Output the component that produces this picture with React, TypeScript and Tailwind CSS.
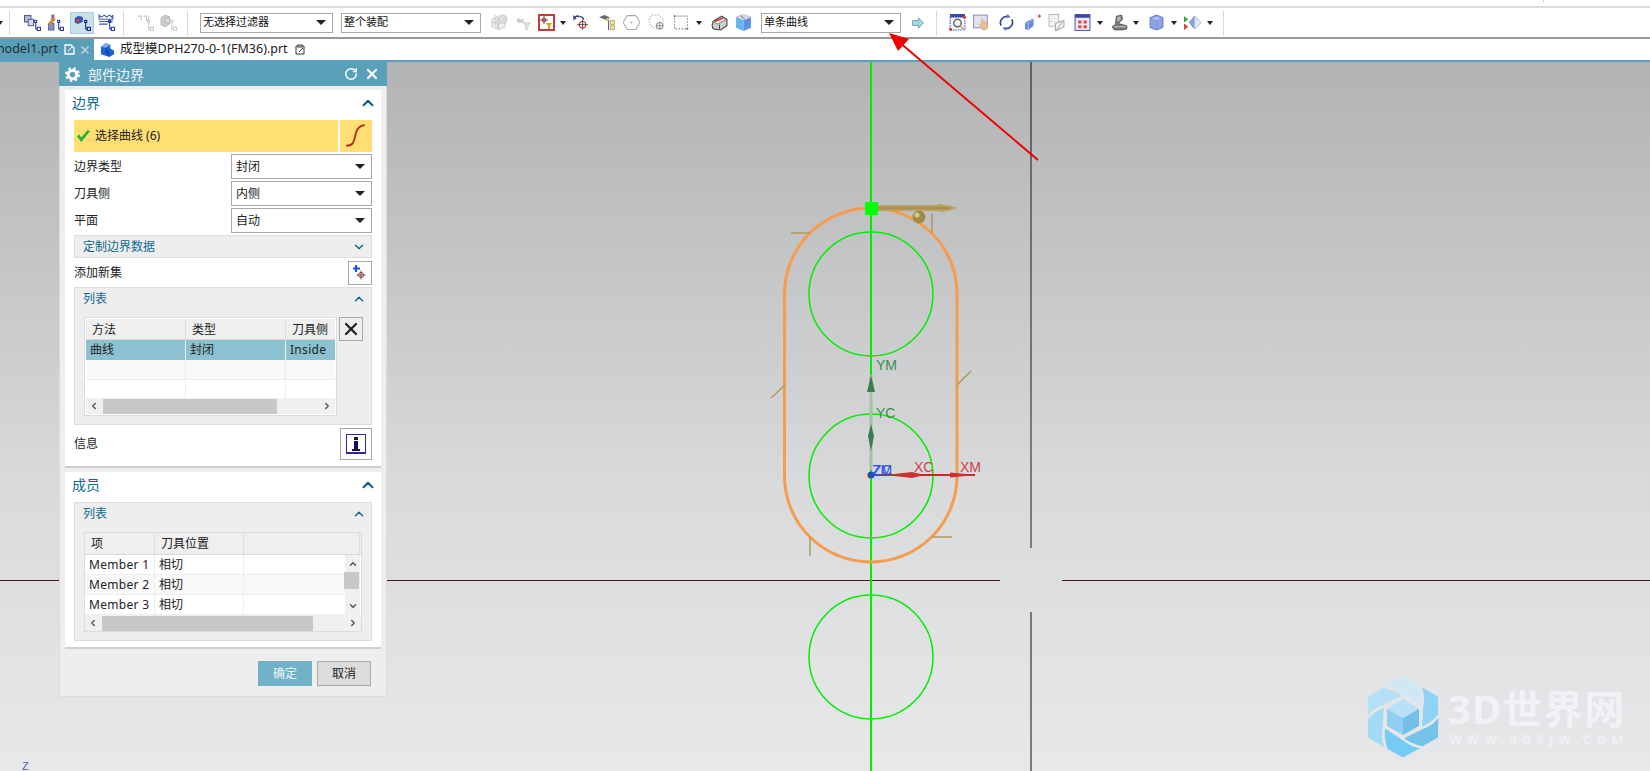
import React from "react";
import { ChevronUp, ChevronDown, ChevronLeft, ChevronRight, RotateCw, X } from "lucide-react";

const Tree = ({ c = "#2a3aa8" }: { c?: string }) => (
  <g fill="none" stroke={c} strokeWidth="1">
    <path d="M11 8v6h2M11 11h0" />
    <rect x="10" y="6" width="2" height="2" />
    <rect x="12.5" y="12.5" width="3" height="3" />
  </g>
);

const Svg = ({ children }: { children: React.ReactNode }) => (
  <svg width="17" height="17" viewBox="0 0 16 16" className="block">
    {children}
  </svg>
);

const T1 = () => (
  <Svg>
    <rect x="0.5" y="1.5" width="6" height="6" fill="#b9bfd8" stroke="#4a5590" />
    <rect x="4" y="5" width="5" height="6" fill="#d5d8e8" stroke="#5a6598" />
    <Tree />
  </Svg>
);
const T2 = () => (
  <Svg>
    <rect x="4" y="0.5" width="3" height="6" fill="#8a6f98" />
    <rect x="1.5" y="9" width="5" height="6" fill="#8a93c8" stroke="#5a6598" />
    <path d="M2 10L7 4" stroke="#c68a40" strokeWidth="3" />
    <Tree />
  </Svg>
);
const T3 = () => (
  <Svg>
    <path d="M1 4l3-2 4 1v4l-4 2-3-1z" fill="#3a55c8" stroke="#26308a" strokeWidth=".5" />
    <circle cx="3.5" cy="6" r="1.6" fill="#d8402a" />
    <Tree c="#16208a" />
  </Svg>
);
const T4 = () => (
  <Svg>
    <path d="M1 1l2 2 3-2 2 2 3-2 2 2 1-2v4H1z" fill="none" stroke="#3a5a9a" />
    <path d="M1 7h13M1 9.5h8" stroke="#3a5a9a" />
    <Tree />
  </Svg>
);
const T5 = () => (
  <Svg>
    <path d="M1 2h3v3M6 2h3v4h2V2M4 2v4" fill="none" stroke="#c8c8c8" />
    <Tree c="#c8c8c8" />
  </Svg>
);
const T6 = () => (
  <Svg>
    <path d="M1 4l4-3 4 2v6l-4 3-4-2z" fill="#cfcfcf" stroke="#bbb" />
    <circle cx="7" cy="6" r="2.5" fill="#ddd" stroke="#bbb" />
    <Tree c="#cfcfcf" />
  </Svg>
);
const A1 = () => (
  <Svg>
    <path d="M1 5l5-3v12l-5-2z" fill="#eee" stroke="#ccc" />
    <path d="M6 8h-6M4 1v10" stroke="#ccc" />
    <circle cx="11" cy="5" r="4" fill="#ddd" stroke="#c8c8c8" />
    <path d="M7 9l6-1v4l-6 3z" fill="#eee" stroke="#ccc" />
  </Svg>
);
const A2 = () => (
  <Svg>
    <path d="M1 6l3-3v2h4v3H4v1z" fill="#ccc" />
    <path d="M7 8h8l-3 4v3h-2v-3z" fill="#ddd" stroke="#ccc" strokeWidth=".5" />
  </Svg>
);
const Target = ({ x, y, r = 2.5 }: { x: number; y: number; r?: number }) => (
  <g fill="none">
    <circle cx={x} cy={y} r={r} stroke="#d22" />
    <path d={`M${x - r - 2} ${y}h${2 * r + 4}M${x} ${y - r - 2}v${2 * r + 4}`} stroke="#222" strokeWidth=".7" />
  </g>
);
const A3 = () => (
  <div className="w-[17px] h-[17px] border-2 border-[#c8393c] flex">
    <svg width="13" height="13" viewBox="0 0 13 13">
      <Target x={4} y={4} r={2} />
      <path d="M6 7h6L10 10v3H8v-3z" fill="#e0a020" />
    </svg>
  </div>
);
const A4 = () => (
  <Svg>
    <path d="M6 2.5a3.5 3.5 0 0 0-5 1.5" fill="none" stroke="#334488" strokeWidth="1.5" />
    <path d="M0 1l.5 5 3-2z" fill="#334488" />
    <path d="M6 2.5c3 0 4 1 4 3" fill="none" stroke="#334488" strokeWidth="1.2" />
    <Target x={9} y={10} r={3} />
  </Svg>
);
const A5 = () => (
  <Svg>
    <path d="M0 3l5-2 5 2-2 3-3-1z" fill="#667" />
    <circle cx="8" cy="5" r="1.5" fill="#d8c050" />
    <path d="M9 6v9" stroke="#5060a8" />
    <rect x="10.5" y="6" width="4" height="4" fill="#e8dca0" stroke="#b8a040" strokeWidth=".6" />
    <rect x="10.5" y="11" width="4" height="4" fill="#e8dca0" stroke="#b8a040" strokeWidth=".6" />
  </Svg>
);
const A6 = () => (
  <Svg>
    <path d="M4 1.5h8l4 6.500-4 6.500H4L0 8z" fill="none" stroke="#aaa" />
    <circle cx="8" cy="8" r="1" fill="#aaa" />
  </Svg>
);
const A7 = () => (
  <Svg>
    <path d="M4 1l7 0 3 4v5l-6 4-6-3-1-6z" fill="none" stroke="#aaa" strokeDasharray="1.3 1.3" />
    <circle cx="11" cy="11" r="3" fill="#eee" stroke="#999" />
    <path d="M7 11h8M11 7v8" stroke="#777" strokeWidth=".6" />
  </Svg>
);
const A8 = () => (
  <Svg>
    <rect x="1.5" y="2" width="12" height="12" fill="none" stroke="#888" strokeDasharray="1.5 1.3" />
    <circle cx="1.5" cy="2" r="1" fill="#888" />
    <circle cx="13.5" cy="14" r="1" fill="#888" />
  </Svg>
);
const A9 = () => (
  <Svg>
    <path d="M1 11l1-4 8-5 5 3v6l-6 4-7-1z" fill="#cfcfcf" stroke="#444" />
    <path d="M3 7.500l8-4 3 2-8 4z" fill="#eee" stroke="#555" strokeWidth=".6" />
    <path d="M4 7l7-3" stroke="#d33" strokeWidth="1.3" />
    <path d="M8 10v4" stroke="#444" />
  </Svg>
);
const A10 = () => (
  <Svg>
    <path d="M1 3l7-3 7 3-7 3z" fill="#bfe6f8" stroke="#e88" strokeWidth=".5" />
    <path d="M1 3l7 3v10l-7-3z" fill="#62b8ee" />
    <path d="M15 3l-7 3v10l7-3z" fill="#5f90e8" />
    <path d="M5 1.500l4 3" stroke="#d33" strokeWidth=".8" />
  </Svg>
);
const GoArrow = () => (
  <svg width="12" height="12" viewBox="0 0 12 12" className="block">
    <path d="M0.5 3.500h6V0.700L11.500 6l-5 5.300V8.500h-6z" fill="#a6d8e4" stroke="#5a8fa8" strokeWidth=".7" />
  </svg>
);
const B1 = () => (
  <Svg>
    <rect x="1" y="0" width="14" height="3" fill="#3a4a9a" />
    <rect x="1" y="3" width="14" height="12" fill="#f2f4fb" stroke="#3a4ad8" strokeDasharray="1.4 1" />
    <circle cx="8" cy="8.500" r="3.500" fill="none" stroke="#666" strokeWidth="1.4" />
    <path d="M10.500 11l3 3" stroke="#c9a860" strokeWidth="1.5" />
    <circle cx="1.500" cy="14.500" r="1.400" fill="#d8342a" />
    <circle cx="14.500" cy="3" r="1.400" fill="#d8342a" />
  </Svg>
);
const B2 = () => (
  <Svg>
    <rect x="0.5" y="1" width="13" height="12" fill="#dfe3f2" stroke="#8a94c0" />
    <path d="M8 8l0-3 1 0 1 3 1-2 1 3 1-1 1 4-2 3h-3l-3-5z" fill="#e8c090" stroke="#c8a070" strokeWidth=".4" />
  </Svg>
);
const B3 = () => (
  <Svg>
    <path d="M3 11A6 6 0 0 1 10 2.500" fill="none" stroke="#3a4a8a" strokeWidth="1.6" />
    <path d="M13 5A6 6 0 0 1 6 13.500" fill="none" stroke="#3a4a8a" strokeWidth="1.6" />
    <path d="M9 0l3 3-4 1zM7 16l-3-3 4-1z" fill="#6a7ac8" />
  </Svg>
);
const B4 = () => (
  <Svg>
    <path d="M1 8l8-4v7l-5 4-3-1z" fill="#6a88e0" />
    <path d="M4 15V9L1 8M4 9l5-5" stroke="#c8d4f4" strokeWidth=".6" fill="none" />
    <path d="M13 2h3M14.500 .5v3" stroke="#e33" />
  </Svg>
);
const B5 = () => (
  <Svg>
    <rect x="1" y="0.5" width="9" height="11" fill="#f4f4f4" stroke="#bbb" />
    <path d="M3 4h1M6 4h1M3 7h1M6 7h1" stroke="#bbb" />
    <path d="M7 9l8-3v6l-8 4z" fill="#f4f4f4" stroke="#aaa" />
    <path d="M8 15l6-8" stroke="#bbb" />
  </Svg>
);
const B6 = () => (
  <Svg>
    <rect x="1" y="0.5" width="14" height="15" fill="#e8ecf8" stroke="#5560b8" />
    <rect x="1" y="0.5" width="14" height="3" fill="#3a46a8" />
    <path d="M4 6h3v3H4zM9 6h3v3H9zM4 10.500h3v3H4zM9 10.500h3v3H9z" fill="#e84a30" />
  </Svg>
);
const B7 = () => (
  <Svg>
    <path d="M5 2l5-1 1 4-4 4 8 2v3l-4 1H3l-2-3 3-2z" fill="#777" stroke="#444" strokeWidth=".6" />
    <path d="M6 3l3-1 0 3-3 3z" fill="#bbb" />
    <path d="M3 12h11" stroke="#ccc" />
  </Svg>
);
const B8 = () => (
  <Svg>
    <path d="M2 3.500L8 1l6 2.500v9L8 15l-6-2.500z" fill="#90a4e4" stroke="#6b7ecb" />
    <path d="M2 3.500L8 6l6-2.500" fill="#bccbf4" stroke="#6b7ecb" strokeWidth=".5" />
    <path d="M8 6v9" stroke="#6b7ecb" strokeWidth=".5" />
  </Svg>
);
const B9 = () => (
  <Svg>
    <path d="M0 2l4 3-4 3z" fill="#2ea83e" />
    <path d="M0 9l4 3-4 3z" fill="#d8403a" />
    <path d="M5 8l5-6 6 6-6 6z" fill="#8ea2cf" stroke="#5a6a98" strokeWidth=".6" />
    <path d="M10 2l6 6-6 6z" fill="#dfe6f4" />
  </Svg>
);

const Slot = ({ className = "", children }: { className?: string; children: React.ReactNode }) => (
  <div className={`w-[24px] h-[22px] shrink-0 flex items-center justify-center ${className}`}>{children}</div>
);
const Caret = ({ className = "" }: { className?: string }) => (
  <div className={`w-[12px] h-[22px] shrink-0 flex items-center justify-center ${className}`}>
    <div className="w-0 h-0 border-x-[3.5px] border-x-transparent border-t-[4px] border-t-[#222]" />
  </div>
);
const Sep = ({ className = "" }: { className?: string }) => <div className={`w-px h-[24px] bg-[#d8d8d8] shrink-0 ${className}`} />;
const Arrow = () => <div className="w-0 h-0 border-x-[5px] border-x-transparent border-t-[5px] border-t-[#222]" />;

const ToolSelect = ({ label, className }: { label: string; className: string }) => (
  <div className={`h-[20px] border border-[#a8a8a8] shrink-0 flex items-center justify-between pl-[2px] pr-[6px] text-[11px] text-[#111] ${className}`}>
    <span>{label}</span>
    <Arrow />
  </div>
);

const Toolbar = () => (
  <div className="h-[33px] border-t-2 border-b-2 border-t-[#dcdcdc] border-b-[#999] flex items-center overflow-hidden bg-white">
    <Caret className="ml-[-6px]" />
    <Sep className="ml-[3px]" />
    <Slot className="ml-[10px]"><T1 /></Slot>
    <Slot className="-ml-px"><T2 /></Slot>
    <Slot className="ml-[3px] bg-[#c8e2ec] border border-[#a8d0dc]"><T3 /></Slot>
    <Slot><T4 /></Slot>
    <Sep className="ml-[5px]" />
    <Slot className="ml-[9px]"><T5 /></Slot>
    <Slot className="-ml-px"><T6 /></Slot>
    <Sep className="ml-[7px]" />
    <ToolSelect label="无选择过滤器" className="ml-[12px] w-[133px]" />
    <ToolSelect label="整个装配" className="ml-[8px] w-[140px]" />
    <Slot className="ml-[6px]"><A1 /></Slot>
    <Slot><A2 /></Slot>
    <Slot className="-ml-px"><A3 /></Slot>
    <Caret className="-ml-px" />
    <Slot><A4 /></Slot>
    <Slot className="ml-[2px]"><A5 /></Slot>
    <Slot><A6 /></Slot>
    <Slot className="ml-[1px]"><A7 /></Slot>
    <Slot className="ml-[1px]"><A8 /></Slot>
    <Caret />
    <Slot className="ml-[2px]"><A9 /></Slot>
    <Slot><A10 /></Slot>
    <ToolSelect label="单条曲线" className="ml-[6px] w-[140px]" />
    <Slot className="ml-[5px]"><GoArrow /></Slot>
    <Sep className="ml-[6px]" />
    <Slot className="ml-[8px]"><B1 /></Slot>
    <Slot><B2 /></Slot>
    <Slot className="ml-[1px]"><B3 /></Slot>
    <Slot className="ml-[2px]"><B4 /></Slot>
    <Slot><B5 /></Slot>
    <Slot className="ml-[2px]"><B6 /></Slot>
    <Caret />
    <Slot className="ml-[1px]"><B7 /></Slot>
    <Caret className="-ml-px" />
    <Slot className="ml-[2px]"><B8 /></Slot>
    <Caret />
    <Slot><B9 /></Slot>
    <Caret />
    <Sep className="ml-[7px]" />
  </div>
);

const Tabs = () => (
  <div className="h-[21px] flex bg-white text-[12.5px] text-[#222]">
    <div className="w-[94px] bg-[#5a9fb9] flex items-center justify-end overflow-hidden pr-[3px] text-[#1f2d38]">
      <span className="whitespace-nowrap">model1.prt</span>
      <svg width="11" height="11" viewBox="0 0 11 11" className="shrink-0 ml-[6px]">
        <path d="M1 1h6l3 3v6H1z" fill="none" stroke="#fff" strokeWidth="1.3" />
        <path d="M4 7l4-4" stroke="#fff" />
      </svg>
      <X size={12} strokeWidth={3.4} className="text-[#b6d2dd] shrink-0 ml-[4px]" />
    </div>
    <div className="flex items-center pl-[6px] gap-[5px]">
      <svg width="15" height="15" viewBox="0 0 16 16">
        <path d="M1 10V5l5-4 5 2v4l4 2v4l-5 3-9-3z" fill="#1f63d8" />
        <path d="M6 1l5 2-5 3-5-1z" fill="#7fb0f2" />
        <path d="M6 6v5l4 5v-5z" fill="#0f44a8" />
      </svg>
      <span className="whitespace-nowrap">成型模DPH270-0-1(FM36).prt</span>
      <svg width="11" height="12" viewBox="0 0 11 12" className="ml-[2px]">
        <path d="M1 2h2M7 2h2v8H1V2" fill="none" stroke="#333" />
        <rect x="3" y="1" width="4" height="2" fill="none" stroke="#333" />
        <path d="M4 8l4-4" stroke="#333" />
      </svg>
    </div>
  </div>
);

const Dropdown = ({ label, text }: { label: string; text: string }) => (
  <div className="h-[25px] flex items-center justify-between">
    <span className="text-[12px] text-[#222]">{label}</span>
    <div className="w-[141px] h-[25px] border border-[#a8a8a8] flex items-center justify-between pl-[4px] pr-[6px] text-[12px] text-[#222]">
      <span>{text}</span>
      <Arrow />
    </div>
  </div>
);

const SubHead = ({ text, up }: { text: string; up?: boolean }) => (
  <div className="flex items-center justify-between h-[22px] pl-[8px] pr-[5px]">
    <span className="text-[12px] text-[#0d6a8c]">{text}</span>
    {up ? <ChevronUp size={14} strokeWidth={2.5} className="text-[#0d6a8c]" /> : <ChevronDown size={14} strokeWidth={2.5} className="text-[#0d6a8c]" />}
  </div>
);

const SectionHead = ({ text }: { text: string }) => (
  <div className="h-[30px] flex items-center justify-between pl-[7px] pr-[4px] pb-[5px]">
    <span className="text-[14px] text-[#0d6a8c]">{text}</span>
    <ChevronUp size={18} strokeWidth={2.6} className="text-[#0d5f80]" />
  </div>
);

const HScroll = ({ thumb, width }: { thumb: string; width: string }) => (
  <div className={`h-[16px] bg-[#f0f0f0] flex items-center ${width}`}>
    <ChevronLeft size={10} strokeWidth={3.5} className="text-[#555] ml-[3px] mr-[4px] shrink-0" />
    <div className={`h-[15px] bg-[#c8c8c8] shrink-0 ${thumb}`} />
    <div className="flex-1" />
    <ChevronRight size={10} strokeWidth={3.5} className="text-[#555] mr-[3px] shrink-0" />
  </div>
);

const Cell = ({ className = "", children }: { className?: string; children?: React.ReactNode }) => (
  <div className={`h-full flex items-center shrink-0 text-[12px] text-[#222] ${className}`}>{children}</div>
);

const Gear = () => (
  <svg width="15" height="15" viewBox="0 0 16 16" fill="none">
    <circle cx="8" cy="8" r="4.500" stroke="#fff" strokeWidth="3" />
    <circle cx="8" cy="8" r="6.600" stroke="#fff" strokeWidth="2.600" strokeDasharray="2.600 2.580" />
  </svg>
);

const Panel = () => (
  <div className="absolute left-[59px] top-0 w-[328px] [font-family:'Noto_Sans','Noto_Sans_CJK_SC',sans-serif]">
    <div className="h-[24px] bg-[#5aa0b9] flex items-center pl-[6px] pr-[7px] text-white">
      <Gear />
      <span className="ml-[8px] text-[14px] text-[#e8f2f6]">部件边界</span>
      <div className="flex-1" />
      <RotateCw size={14} strokeWidth={2.4} />
      <X size={16} strokeWidth={3.2} className="ml-[6px]" />
    </div>
    <div className="h-[611px] bg-[#eeeeee] border-x border-b border-[#dcdcdc] pt-[4px] px-[5px]">
      <div className="bg-white h-[378px] border-b-2 border-[#cfcfcf]">
        <SectionHead text="边界" />
        <div className="px-[9px]">
          <div className="flex gap-[2px] h-[32px]">
            <div className="w-[264px] bg-[#ffdf74] flex items-center pl-[2px] gap-[4px] text-[12px] text-[#222]">
              <svg width="15" height="14" viewBox="0 0 14 13">
                <path d="M1 7l4 5 8-10-2-1-6 7-2-3z" fill="#24b030" />
              </svg>
              <span>选择曲线 (6)</span>
            </div>
            <div className="w-[32px] bg-[#ffdf74] flex items-center justify-center">
              <svg width="24" height="26" viewBox="0 0 22 24" fill="none">
                <path d="M2 21c6 0 7-3 8-8s2-10 9-11" stroke="#b02818" strokeWidth="1.700" />
              </svg>
            </div>
          </div>
          <div className="flex flex-col gap-[2px] mt-[2px]">
            <Dropdown label="边界类型" text="封闭" />
            <Dropdown label="刀具侧" text="内侧" />
            <Dropdown label="平面" text="自动" />
          </div>
          <div className="mt-[2px] h-[23px] bg-[#eeeeee] border border-[#dedede]">
            <SubHead text="定制边界数据" />
          </div>
          <div className="h-[27px] mt-[1px] flex items-center justify-between text-[12px] text-[#222]">
            <span>添加新集</span>
            <div className="w-[24px] h-[24px] border border-[#a8a8a8] flex items-center justify-center">
              <svg width="16" height="16" viewBox="0 0 16 16">
                <path d="M4 0v7M1 3.500h7" stroke="#1050e8" strokeWidth="2" />
                <Target x={9} y={10} r={2.500} />
              </svg>
            </div>
          </div>
          <div className="mt-[1px] h-[138px] bg-[#eeeeee] border border-[#dedede]">
            <SubHead text="列表" up />
            <div className="pl-[9px] flex gap-[2px] mt-[7px]">
              <div className="w-[253px] h-[99px] border border-[#dcdcdc] bg-white p-px">
                <div className="h-[21px] flex bg-[#efefef] border-b border-[#d8d8d8] pt-px">
                  <Cell className="w-[100px] pl-[6px] border-r border-[#dcdcdc]">方法</Cell>
                  <Cell className="w-[100px] pl-[6px] border-r border-[#dcdcdc]">类型</Cell>
                  <Cell className="w-[49px] pl-[6px]">刀具侧</Cell>
                </div>
                <div className="h-[20px] flex bg-[#8bc1d1]">
                  <Cell className="w-[100px] pl-[4px] border-r border-[#eeeeee]">曲线</Cell>
                  <Cell className="w-[100px] pl-[4px] border-r border-[#eeeeee]">封闭</Cell>
                  <Cell className="w-[49px] pl-[4px] tracking-[0.3px]">Inside</Cell>
                </div>
                <div className="h-[20px] flex bg-[#f9f9f9] border-b border-[#eeeeee]">
                  <Cell className="w-[100px] border-r border-[#eeeeee]" />
                  <Cell className="w-[100px] border-r border-[#eeeeee]" />
                </div>
                <div className="h-[18px] flex">
                  <Cell className="w-[100px] border-r border-[#eeeeee]" />
                  <Cell className="w-[100px] border-r border-[#eeeeee]" />
                </div>
                <HScroll thumb="w-[174px]" width="w-full" />
              </div>
              <div className="w-[24px] h-[24px] border border-[#a8a8a8] flex items-center justify-center">
                <X size={20} strokeWidth={2.7} className="text-[#222]" />
              </div>
            </div>
          </div>
          <div className="mt-[3px] h-[32px] flex items-center justify-between text-[12px] text-[#222]">
            <span>信息</span>
            <div className="w-[32px] h-[32px] border border-[#a8a8a8] flex items-center justify-center">
              <div className="w-[20px] h-[20px] border border-[#2a2a9a] border-b-2 flex flex-col items-center justify-center">
                <div className="w-[4px] h-[3px] bg-[#101060]" />
                <div className="w-[4px] h-[8px] bg-[#101060] mt-[1px]" />
                <div className="w-[8px] h-[2px] bg-[#101060]" />
              </div>
            </div>
          </div>
        </div>
      </div>
      <div className="bg-white h-[177px] mt-[4px] border-b-2 border-[#cfcfcf]">
        <SectionHead text="成员" />
        <div className="px-[9px]">
          <div className="h-[139px] bg-[#eeeeee] border border-[#dedede]">
            <SubHead text="列表" up />
            <div className="relative w-[278px] h-[100px] ml-[9px] mt-[7px] border border-[#dcdcdc] bg-white">
              <div className="h-[22px] flex bg-[#efefef] border-b border-[#d8d8d8] pr-[1px] pt-px">
                <Cell className="w-[70px] pl-[6px] border-r border-[#dcdcdc]">项</Cell>
                <Cell className="w-[89px] pl-[6px] border-r border-[#dcdcdc]">刀具位置</Cell>
                <Cell className="w-[116px] border-r border-[#dcdcdc]" />
              </div>
              <div className="flex">
                <div className="w-[260px]">
                  {["Member 1", "Member 2", "Member 3"].map((m, i) => (
                    <div key={m} className={`h-[20px] flex border-b border-[#eeeeee] ${i === 1 ? "bg-[#f9f9f9]" : ""}`}>
                      <Cell className="w-[70px] pl-[4px] border-r border-[#eeeeee] tracking-[0.3px]">{m}</Cell>
                      <Cell className="w-[89px] pl-[4px] border-r border-[#eeeeee]">相切</Cell>
                    </div>
                  ))}
                </div>
                <div className="w-[15px] h-[60px] bg-[#f0f0f0] flex flex-col items-center justify-between py-[4px]">
                  <ChevronUp size={10} strokeWidth={3.5} className="text-[#555]" />
                  <div className="absolute right-[2px] top-[39px] w-[15px] h-[17px] bg-[#c8c8c8]" />
                  <ChevronDown size={10} strokeWidth={3.5} className="text-[#555]" />
                </div>
              </div>
              <HScroll thumb="w-[211px]" width="w-[276px]" />
            </div>
          </div>
        </div>
      </div>
      <div className="flex justify-end gap-[5px] mt-[12px] pr-[10px] text-[12px]">
        <div className="w-[54px] h-[25px] bg-[#72b2c8] text-[#eaf6fa] flex items-center justify-center">确定</div>
        <div className="w-[54px] h-[25px] bg-[#dcdcdc] border border-[#a8a8a8] text-[#222] flex items-center justify-center">取消</div>
      </div>
    </div>
  </div>
);

const Blade = "M-18 -31L0 -41L16 -32Q20 -18 18 -11L0 -23Q-8 -30 -18 -31Z";

const Scene = () => (
  <svg className="absolute inset-0 w-full h-full overflow-visible" viewBox="0 62 1650 709" fontFamily="'Liberation Sans',sans-serif">
    <g strokeWidth="1">
      <path d="M1031 62V160" stroke="#111" />
      <path d="M1031 160V548" stroke="#2a1416" />
      <path d="M1031 612V771" stroke="#111" />
      <path d="M0 580.500H1000M1062 580.500H1650" stroke="#4a1820" />
    </g>
    <path d="M871 62V771" stroke="#00ee00" strokeWidth="2" />
    <g fill="none" stroke="#00ee00" strokeWidth="1.500">
      <circle cx="871" cy="294" r="62" />
      <circle cx="871" cy="476" r="62" />
      <circle cx="871" cy="657" r="62" />
    </g>
    <rect x="784.500" y="208" width="172.500" height="354" rx="86" fill="none" stroke="#f79c4c" strokeWidth="3" />
    <path d="M791 233H810M932 214V233M771 398L785 385M957 385L971 371M810 537V556M932 537H952" stroke="#b09a5c" strokeWidth="1.500" fill="none" />
    <path d="M878 205L938 205V204L941 204L948 205.500H950L957 208L950 210.500L941 212L938 211L878 211Z" fill="#b8a262" />
    <path d="M878 208H950" stroke="#8f7c3e" strokeWidth="1" />
    <circle cx="919" cy="217" r="6.500" fill="#a08a48" />
    <circle cx="917" cy="215" r="2.500" fill="#d8c98a" />
    <rect x="865" y="202" width="13" height="13" fill="#00ff00" />
    <path d="M871 470V375" stroke="#a8c0a8" strokeWidth="3" />
    <path d="M871 375L867 392H875ZM871 424L868 436L871 451L874 436Z" fill="#3c7c4c" />
    <path d="M871 475H975" stroke="#c82828" strokeWidth="2" />
    <path d="M885 475L912 472L925 475L912 478ZM950 472.500L976 475L950 477.500Z" fill="#cc3030" />
    <circle cx="871" cy="475" r="3.500" fill="#1f4fc8" />
    <g fontSize="14">
      <text x="876" y="370" fill="#3c8c50">YM</text>
      <text x="876" y="418" fill="#3c8c50">YC</text>
      <text x="914" y="472" fill="#cf4048">XC</text>
      <text x="960" y="472" fill="#cf4048">XM</text>
      <text x="872" y="475" fill="#2a50f0">ZM</text>
      <text x="873" y="475" fill="#2a50f0">ZC</text>
      <text x="22" y="770" fill="#5060b0" fontSize="11">Z</text>
    </g>
    <path d="M1038 160L892 36" stroke="#f00000" strokeWidth="2" fill="none" />
    <path d="M889 33L909 39L898 51Z" fill="#f00000" />
    <g transform="translate(1403 717)">
      <g stroke="#e6e7e9" strokeWidth=".8">
        <path d={Blade} fill="#cfe8f6" />
        <path transform="rotate(60)" d={Blade} fill="#8fd2f3" />
        <path transform="rotate(120)" d={Blade} fill="#76c3ea" />
        <path transform="rotate(180)" d={Blade} fill="#74ccf4" />
        <path transform="rotate(240)" d={Blade} fill="#a5daf4" />
        <path transform="rotate(300)" d={Blade} fill="#b5dff5" />
      </g>
      <path d="M0 -18L16 -8L0 1L-16 -8Z" fill="#b5e0f6" />
      <path d="M-16 -8L0 1V18L-16 9Z" fill="#90cff2" />
      <path d="M16 -8L0 1V18L16 9Z" fill="#74bfe8" />
    </g>
  </svg>
);

export default function App() {
  return (
    <div className="w-[1650px] h-[771px] overflow-hidden flex flex-col bg-white [font-family:'Noto_Sans','Noto_Sans_CJK_SC',sans-serif]">
      <div className="h-[6px] flex justify-end pr-[106px]">
        <div className="w-px h-[2px] bg-[#ccc]" />
      </div>
      <Toolbar />
      <Tabs />
      <div className="relative flex-1 border-t-2 border-[#5aa0b9] bg-linear-to-b from-[#b2b3b5] via-[#d9dadc] via-[60%] to-[#e7e8ea]">
        <Scene />
        <Panel />
        <div className="absolute left-[1448px] top-[627px] text-[40px] leading-[40px] font-bold tracking-[1px] text-[#f1f2f5] whitespace-nowrap">3D世界网</div>
        <div className="absolute left-[1449px] top-[670px] text-[13px] leading-[14px] font-bold tracking-[5px] text-[#eff0f3] whitespace-nowrap">WWW.3DSJW.COM</div>
      </div>
    </div>
  );
}
